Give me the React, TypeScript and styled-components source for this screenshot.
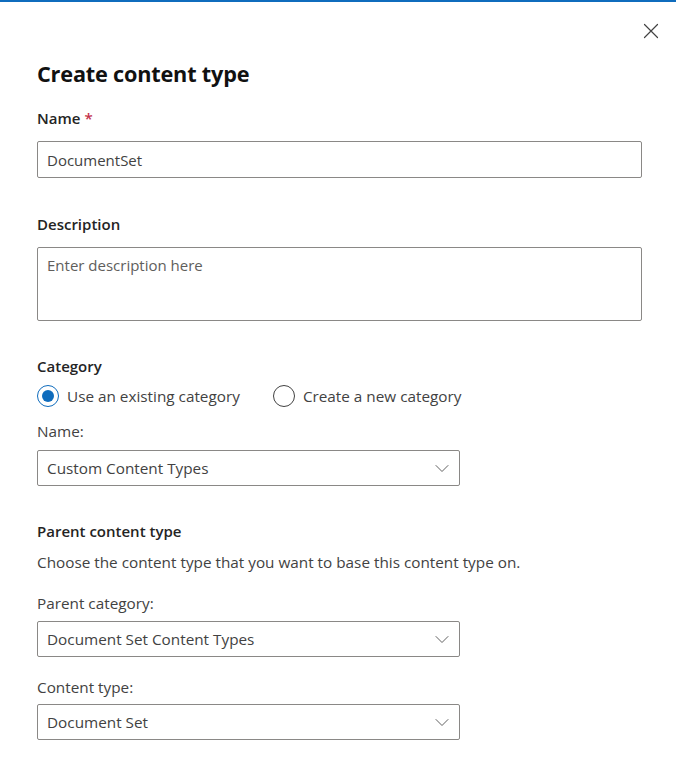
import React, { useState } from 'react';
import styled, { createGlobalStyle } from 'styled-components';

const GlobalStyle = createGlobalStyle`
  html, body {
    margin: 0;
    padding: 0;
    background: #ffffff;
  }
  body {
    font-family: "Open Sans", "Noto Sans", Arial, sans-serif;
    color: #242424;
  }
`;

const Panel = styled.div`
  width: 676px;
  min-height: 774px;
  box-sizing: border-box;
  border-top: 2px solid #0f6cbd;
  background: #fff;
`;

const Header = styled.div`
  height: 58px;
  display: flex;
  justify-content: flex-end;
  align-items: center;
  padding-right: 9px;
`;

const CloseButton = styled.button`
  width: 32px;
  height: 32px;
  border: none;
  background: transparent;
  display: flex;
  align-items: center;
  justify-content: center;
  padding: 0;
  cursor: pointer;
  color: #424242;
`;

const Body = styled.div`
  padding: 0 35px 0 37px;
`;

const Title = styled.h1`
  margin: 0;
  font-size: 21.7px;
  line-height: 28px;
  font-weight: 700;
  color: #111;
  letter-spacing: -0.2px;
`;

const Field = styled.div<{ top: number }>`
  margin-top: ${p => p.top}px;
  display: flex;
  flex-direction: column;
`;

const Label = styled.label<{ gap?: number }>`
  display: block;
  font-size: 15px;
  line-height: 20px;
  font-weight: 600;
  color: #242424;
  margin-bottom: ${p => p.gap ?? 13}px;
`;

const Required = styled.span`
  color: #c4314b;
  margin-left: 4px;
`;

const SubLabel = styled.div<{ gap: number }>`
  font-size: 15.3px;
  line-height: 20px;
  color: #424242;
  margin-bottom: ${p => p.gap}px;
`;

const Hint = styled.p`
  margin: 11px 0 0;
  font-size: 15.3px;
  line-height: 20px;
  color: #424242;
`;

const TextInput = styled.input`
  box-sizing: border-box;
  width: 605px;
  height: 37px;
  border: 1px solid #8a8886;
  border-radius: 2px;
  padding: 0 9px;
  font-family: inherit;
  font-size: 15px;
  color: #424242;
  outline: none;
`;

const TextArea = styled.textarea`
  box-sizing: border-box;
  width: 605px;
  height: 74px;
  border: 1px solid #8a8886;
  border-radius: 2px;
  padding: 7px 9px;
  font-family: inherit;
  font-size: 15px;
  line-height: 20px;
  resize: none;
  outline: none;
  &::placeholder {
    color: #605e5c;
  }
`;

const RadioRow = styled.div`
  display: flex;
  align-items: center;
  gap: 33px;
  margin-top: 10px;
  height: 20px;
`;

const RadioOption = styled.label`
  display: flex;
  align-items: center;
  gap: 8px;
  font-size: 15.3px;
  line-height: 20px;
  color: #424242;
  cursor: pointer;
`;

const RadioCircle = styled.span<{ checked: boolean }>`
  box-sizing: border-box;
  width: 22px;
  height: 22px;
  border-radius: 50%;
  border: 1px solid ${p => (p.checked ? '#0f6cbd' : '#424242')};
  display: flex;
  align-items: center;
  justify-content: center;
  &::after {
    content: '';
    width: 12px;
    height: 12px;
    border-radius: 50%;
    background: ${p => (p.checked ? '#0f6cbd' : 'transparent')};
  }
`;

const Select = styled.div`
  box-sizing: border-box;
  width: 423px;
  height: 36px;
  border: 1px solid #8a8886;
  border-radius: 2px;
  display: flex;
  align-items: center;
  justify-content: space-between;
  padding: 0 9px 0 9px;
  font-size: 15.3px;
  color: #424242;
  cursor: pointer;
`;

const Chevron = () => (
  <svg width="16" height="16" viewBox="0 0 16 16" fill="none">
    <path d="M2 5.5l6 6 6-6" stroke="#616161" strokeWidth="1" strokeLinecap="round" strokeLinejoin="round" />
  </svg>
);

const Dropdown = ({ value }: { value: string }) => (
  <Select>
    <span>{value}</span>
    <Chevron />
  </Select>
);

const App = () => {
  const [category, setCategory] = useState<'existing' | 'new'>('existing');

  return (
    <Panel>
      <GlobalStyle />
      <Header>
        <CloseButton aria-label="Close">
          <svg width="16" height="16" viewBox="0 0 16 16" fill="none">
            <path d="M1.5 1.5l13 13M14.5 1.5l-13 13" stroke="#424242" strokeWidth="1.2" strokeLinecap="round" />
          </svg>
        </CloseButton>
      </Header>
      <Body>
        <Title>Create content type</Title>

        <Field top={20}>
          <Label>
            Name<Required>*</Required>
          </Label>
          <TextInput defaultValue="DocumentSet" />
        </Field>

        <Field top={36}>
          <Label>Description</Label>
          <TextArea placeholder="Enter description here" />
        </Field>

        <Field top={35}>
          <Label gap={0}>Category</Label>
          <RadioRow>
            <RadioOption onClick={() => setCategory('existing')}>
              <RadioCircle checked={category === 'existing'} />
              Use an existing category
            </RadioOption>
            <RadioOption onClick={() => setCategory('new')}>
              <RadioCircle checked={category === 'new'} />
              Create a new category
            </RadioOption>
          </RadioRow>
        </Field>

        <Field top={15}>
          <SubLabel gap={9}>Name:</SubLabel>
          <Dropdown value="Custom Content Types" />
        </Field>

        <Field top={35}>
          <Label gap={0}>Parent content type</Label>
          <Hint>Choose the content type that you want to base this content type on.</Hint>
        </Field>

        <Field top={21}>
          <SubLabel gap={8}>Parent category:</SubLabel>
          <Dropdown value="Document Set Content Types" />
        </Field>

        <Field top={20}>
          <SubLabel gap={7}>Content type:</SubLabel>
          <Dropdown value="Document Set" />
        </Field>
      </Body>
    </Panel>
  );
};

export default App;
